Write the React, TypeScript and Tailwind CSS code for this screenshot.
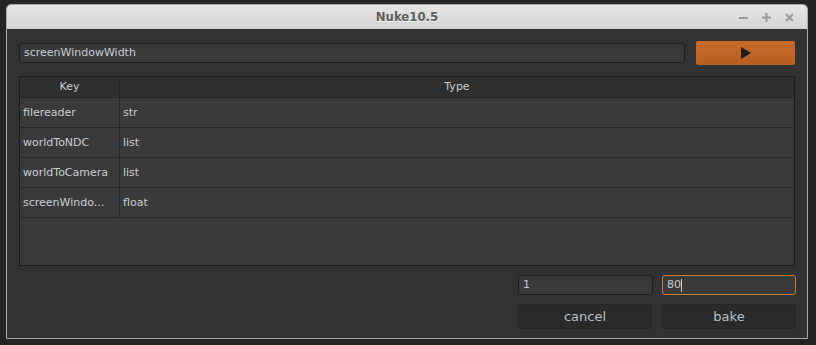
import React from 'react';

const rows = [
  { key: 'filereader', type: 'str' },
  { key: 'worldToNDC', type: 'list' },
  { key: 'worldToCamera', type: 'list' },
  { key: 'screenWindo...', type: 'float' },
];

export default function App() {
  return (
    <div
      className="w-[816px] h-[345px] bg-[#242424] pt-[4px] pl-[6px] pr-[8px] pb-[6px] flex"
      style={{ fontFamily: '"DejaVu Sans", sans-serif' }}
    >
      <div className="flex-1 flex flex-col rounded-t-[5px] border border-[#a9a9a9] overflow-hidden">
        {/* Title bar */}
        <div className="h-[24px] flex-shrink-0 flex items-center bg-gradient-to-b from-[#e6e6e6] to-[#d3d3d3] relative">
          <div
            className="flex-1 text-center text-[13px] font-bold text-[#5c5c5c] [text-shadow:0_1px_0_#f4f4f4]"
            style={{ fontFamily: '"DejaVu Sans Condensed", "DejaVu Sans", sans-serif' }}
          >
            Nuke10.5
          </div>
          <div className="absolute right-[12px] top-0 h-full flex items-center gap-[12px] text-[#9a9a9a]">
            <svg width="11" height="11" viewBox="0 0 11 11">
              <rect x="1" y="5" width="9" height="2" fill="currentColor" />
            </svg>
            <svg width="11" height="11" viewBox="0 0 11 11">
              <rect x="1" y="4.5" width="9" height="2" fill="currentColor" />
              <rect x="4.5" y="1" width="2" height="9" fill="currentColor" />
            </svg>
            <svg width="11" height="11" viewBox="0 0 11 11">
              <path d="M2 2 L9 9 M9 2 L2 9" stroke="currentColor" strokeWidth="2" />
            </svg>
          </div>
        </div>

        {/* Body */}
        <div className="flex-1 bg-[#323232] flex flex-col px-[12px] pt-[12px] pb-[10px] text-[11px] text-[#c9cdd2]">
          <div className="flex items-center gap-[11px] h-[24px]">
            <div className="flex-1 h-[20px] rounded-[3px] border border-[#1e1e1e] bg-[#3a3a3a] flex items-center px-[4px]">
              screenWindowWidth
            </div>
            <button className="w-[99px] h-[24px] rounded-[2px] bg-gradient-to-b from-[#c96c2c] to-[#b55f22] flex items-center justify-center">
              <svg width="10" height="12" viewBox="0 0 10 12">
                <path d="M0 0 L10 6 L0 12 Z" fill="#1e1e1e" />
              </svg>
            </button>
          </div>

          {/* Table */}
          <div className="mt-[11px] h-[190px] border border-[#1c1c1c] bg-[#3a3a3a] flex flex-col">
            <div className="h-[20px] flex bg-[#2f2f2f] flex-shrink-0">
              <div className="w-[100px] border-r border-[#262626] flex items-center justify-center">Key</div>
              <div className="flex-1 flex items-center justify-center">Type</div>
            </div>
            {rows.map((r) => (
              <div key={r.key} className="h-[30px] flex border-t border-[#262626] mr-[1px] ml-[1px] flex-shrink-0">
                <div className="w-[99px] border-r border-[#262626] flex items-center pl-[2px] pt-[1px]">{r.key}</div>
                <div className="flex-1 flex items-center pl-[3px] pt-[1px]">{r.type}</div>
              </div>
            ))}
            <div className="border-t border-[#262626] mx-[1px]" />
          </div>

          {/* Bottom controls */}
          <div className="flex justify-end gap-[9px] mt-[9px] -mr-[1px]">
            <div className="w-[135px] h-[20px] rounded-[3px] border border-[#1e1e1e] bg-[#3a3a3a] flex items-center px-[4px]">
              1
            </div>
            <div className="w-[134px] h-[20px] rounded-[3px] border border-[#d0792a] bg-[#3a3a3a] flex items-center px-[4px]">
              80<span className="w-px h-[13px] bg-[#c9cdd2]" />
            </div>
          </div>
          <div className="flex justify-end gap-[10px] mt-[9px] -mr-[1px]">
            <button className="w-[134px] h-[25px] rounded-[3px] bg-[#2a2a2a] border border-[#262626] text-[13px] text-[#b8c2cc]">
              cancel
            </button>
            <button className="w-[134px] h-[25px] rounded-[3px] bg-[#2a2a2a] border border-[#262626] text-[13px] text-[#b8c2cc]">
              bake
            </button>
          </div>
        </div>
      </div>
    </div>
  );
}
